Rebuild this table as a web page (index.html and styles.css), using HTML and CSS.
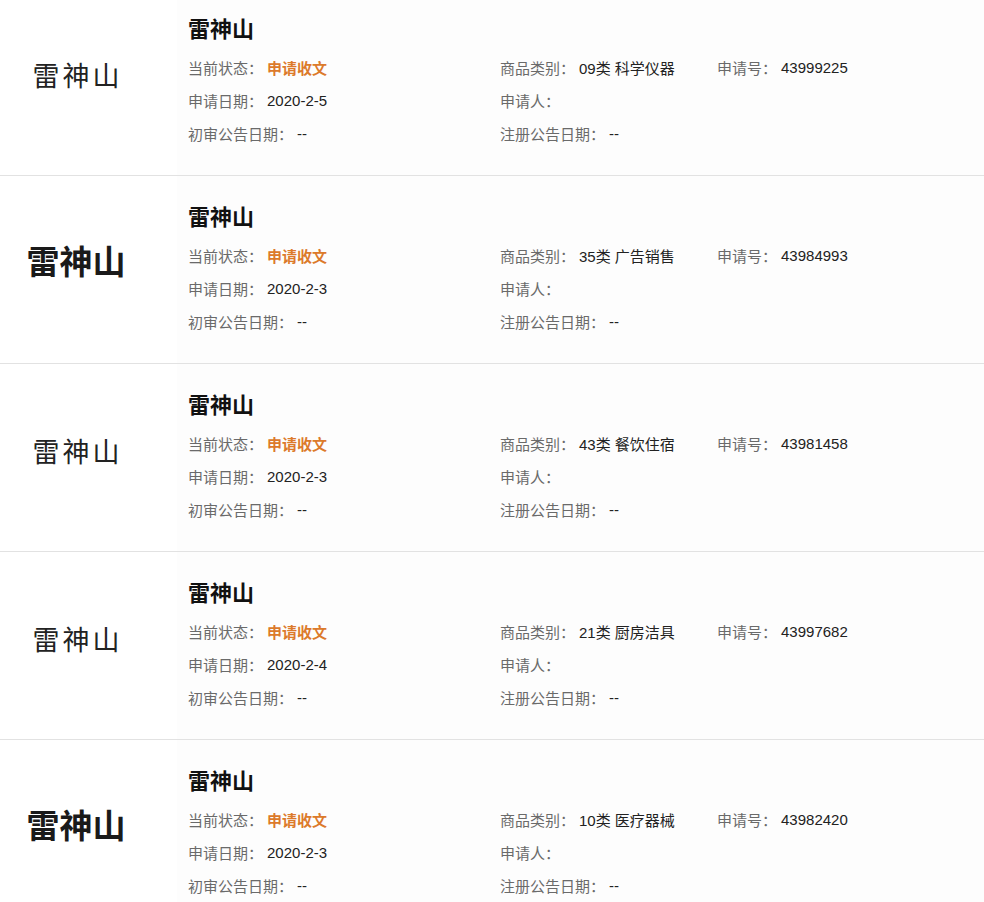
FILE: index.html
```html
<!DOCTYPE html>
<html lang="zh">
<head>
<meta charset="utf-8">
<link rel="stylesheet" href="styles.css">
</head>
<body>
<div class="list">
  <div class="row">
    <div class="logo"><span class="mark serif">雷神山</span></div>
    <div class="info">
      <div class="title">雷神山</div>
      <div class="grid">
        <div class="cell"><span class="lab">当前状态：</span><span class="status">申请收文</span></div>
        <div class="cell"><span class="lab">商品类别：</span><span class="val">09类 科学仪器</span></div>
        <div class="cell"><span class="lab">申请号：</span><span class="val">43999225</span></div>
        <div class="cell"><span class="lab">申请日期：</span><span class="val">2020-2-5</span></div>
        <div class="cell"><span class="lab">申请人：</span></div>
        <div class="cell"></div>
        <div class="cell"><span class="lab">初审公告日期：</span><span class="val">--</span></div>
        <div class="cell"><span class="lab">注册公告日期：</span><span class="val">--</span></div>
        <div class="cell"></div>
      </div>
    </div>
  </div>
  <div class="row">
    <div class="logo"><span class="mark bold">雷神山</span></div>
    <div class="info">
      <div class="title">雷神山</div>
      <div class="grid">
        <div class="cell"><span class="lab">当前状态：</span><span class="status">申请收文</span></div>
        <div class="cell"><span class="lab">商品类别：</span><span class="val">35类 广告销售</span></div>
        <div class="cell"><span class="lab">申请号：</span><span class="val">43984993</span></div>
        <div class="cell"><span class="lab">申请日期：</span><span class="val">2020-2-3</span></div>
        <div class="cell"><span class="lab">申请人：</span></div>
        <div class="cell"></div>
        <div class="cell"><span class="lab">初审公告日期：</span><span class="val">--</span></div>
        <div class="cell"><span class="lab">注册公告日期：</span><span class="val">--</span></div>
        <div class="cell"></div>
      </div>
    </div>
  </div>
  <div class="row">
    <div class="logo"><span class="mark serif">雷神山</span></div>
    <div class="info">
      <div class="title">雷神山</div>
      <div class="grid">
        <div class="cell"><span class="lab">当前状态：</span><span class="status">申请收文</span></div>
        <div class="cell"><span class="lab">商品类别：</span><span class="val">43类 餐饮住宿</span></div>
        <div class="cell"><span class="lab">申请号：</span><span class="val">43981458</span></div>
        <div class="cell"><span class="lab">申请日期：</span><span class="val">2020-2-3</span></div>
        <div class="cell"><span class="lab">申请人：</span></div>
        <div class="cell"></div>
        <div class="cell"><span class="lab">初审公告日期：</span><span class="val">--</span></div>
        <div class="cell"><span class="lab">注册公告日期：</span><span class="val">--</span></div>
        <div class="cell"></div>
      </div>
    </div>
  </div>
  <div class="row">
    <div class="logo"><span class="mark serif">雷神山</span></div>
    <div class="info">
      <div class="title">雷神山</div>
      <div class="grid">
        <div class="cell"><span class="lab">当前状态：</span><span class="status">申请收文</span></div>
        <div class="cell"><span class="lab">商品类别：</span><span class="val">21类 厨房洁具</span></div>
        <div class="cell"><span class="lab">申请号：</span><span class="val">43997682</span></div>
        <div class="cell"><span class="lab">申请日期：</span><span class="val">2020-2-4</span></div>
        <div class="cell"><span class="lab">申请人：</span></div>
        <div class="cell"></div>
        <div class="cell"><span class="lab">初审公告日期：</span><span class="val">--</span></div>
        <div class="cell"><span class="lab">注册公告日期：</span><span class="val">--</span></div>
        <div class="cell"></div>
      </div>
    </div>
  </div>
  <div class="row">
    <div class="logo"><span class="mark bold">雷神山</span></div>
    <div class="info">
      <div class="title">雷神山</div>
      <div class="grid">
        <div class="cell"><span class="lab">当前状态：</span><span class="status">申请收文</span></div>
        <div class="cell"><span class="lab">商品类别：</span><span class="val">10类 医疗器械</span></div>
        <div class="cell"><span class="lab">申请号：</span><span class="val">43982420</span></div>
        <div class="cell"><span class="lab">申请日期：</span><span class="val">2020-2-3</span></div>
        <div class="cell"><span class="lab">申请人：</span></div>
        <div class="cell"></div>
        <div class="cell"><span class="lab">初审公告日期：</span><span class="val">--</span></div>
        <div class="cell"><span class="lab">注册公告日期：</span><span class="val">--</span></div>
        <div class="cell"></div>
      </div>
    </div>
  </div>
</div>
</body>
</html>
```
FILE: styles.css
```css
html, body {
  margin: 0;
  padding: 0;
  background: #ffffff;
  overflow: hidden;
}
body {
  font-family: "Liberation Sans", "Noto Sans CJK SC", sans-serif;
}
.list {
  margin-top: -12px;
}
.row {
  display: flex;
  height: 187px;
  border-bottom: 1px solid #e2e2e2;
}
.logo {
  width: 152px;
  padding-right: 25px;
  padding-bottom: 14px;
  flex: none;
  display: flex;
  align-items: center;
  justify-content: center;
  background: #ffffff;
}
.mark {
  font-family: "Noto Sans CJK SC", sans-serif;
  color: #222;
  white-space: nowrap;
}
.mark.serif {
  font-size: 27px;
  font-weight: 400;
  letter-spacing: 3px;
  margin-left: 3px;
}
.mark.bold {
  font-size: 33px;
  font-weight: 700;
  letter-spacing: 0;
  color: #1a1a1a;
  margin-bottom: 6px;
}
.info {
  flex: 1;
  background: #fdfdfd;
  padding-top: 24px;
  padding-left: 11px;
}
.title {
  font-family: "Noto Sans CJK SC", sans-serif;
  font-size: 22px;
  font-weight: 700;
  line-height: 30px;
  color: #111;
  margin-bottom: 9px;
}
.grid {
  display: grid;
  grid-template-columns: 312px 217px 1fr;
  grid-auto-rows: 33px;
  font-size: 15px;
}
.cell {
  display: flex;
  align-items: center;
  white-space: nowrap;
}
.lab {
  color: #6a6a6a;
  margin-right: 4px;
}
.val {
  color: #222;
}
.status {
  color: #dc7a2b;
  font-weight: 700;
}
```
